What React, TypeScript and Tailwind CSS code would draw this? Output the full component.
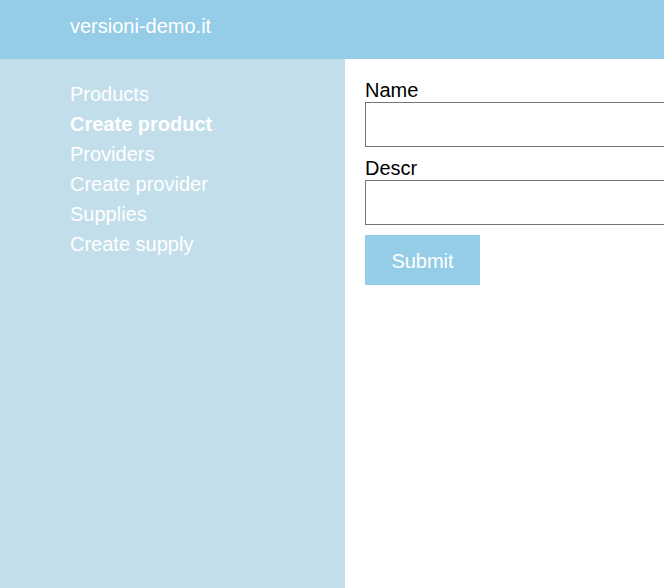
import React from "react";

const links = [
  { label: "Products", active: false },
  { label: "Create product", active: true },
  { label: "Providers", active: false },
  { label: "Create provider", active: false },
  { label: "Supplies", active: false },
  { label: "Create supply", active: false },
];

export default function App() {
  return (
    <div className="min-h-screen flex flex-col overflow-hidden font-['Liberation_Sans',Arial,sans-serif] text-[20px]">
      {/* Header */}
      <header className="h-[59px] bg-[#95cde8] pl-[70px] pt-[15px] text-white leading-[23px]">
        versioni-demo.it
      </header>

      <div className="flex flex-1">
        {/* Sidebar */}
        <nav className="w-[345px] shrink-0 bg-[#c2deeb] pl-[70px] pt-5 flex flex-col leading-[30px] text-white">
          {links.map((l) => (
            <a key={l.label} href="#" className={l.active ? "font-bold" : ""}>
              {l.label}
            </a>
          ))}
        </nav>

        {/* Form */}
        <main className="flex-1 bg-white pl-5 pt-5 overflow-hidden">
          <form className="flex flex-col text-black leading-[23px]" onSubmit={(e) => e.preventDefault()}>
            <label htmlFor="name">Name</label>
            <input id="name" type="text" className="w-[400px] h-[45px] border border-[#767676] px-2 shrink-0" />
            <label htmlFor="descr" className="mt-[10px]">Descr</label>
            <input id="descr" type="text" className="w-[400px] h-[45px] border border-[#767676] px-2 shrink-0" />
            <button
              type="submit"
              className="mt-[10px] w-[115px] h-[50px] pt-[3px] bg-[#95cde8] text-white"
            >
              Submit
            </button>
          </form>
        </main>
      </div>
    </div>
  );
}
